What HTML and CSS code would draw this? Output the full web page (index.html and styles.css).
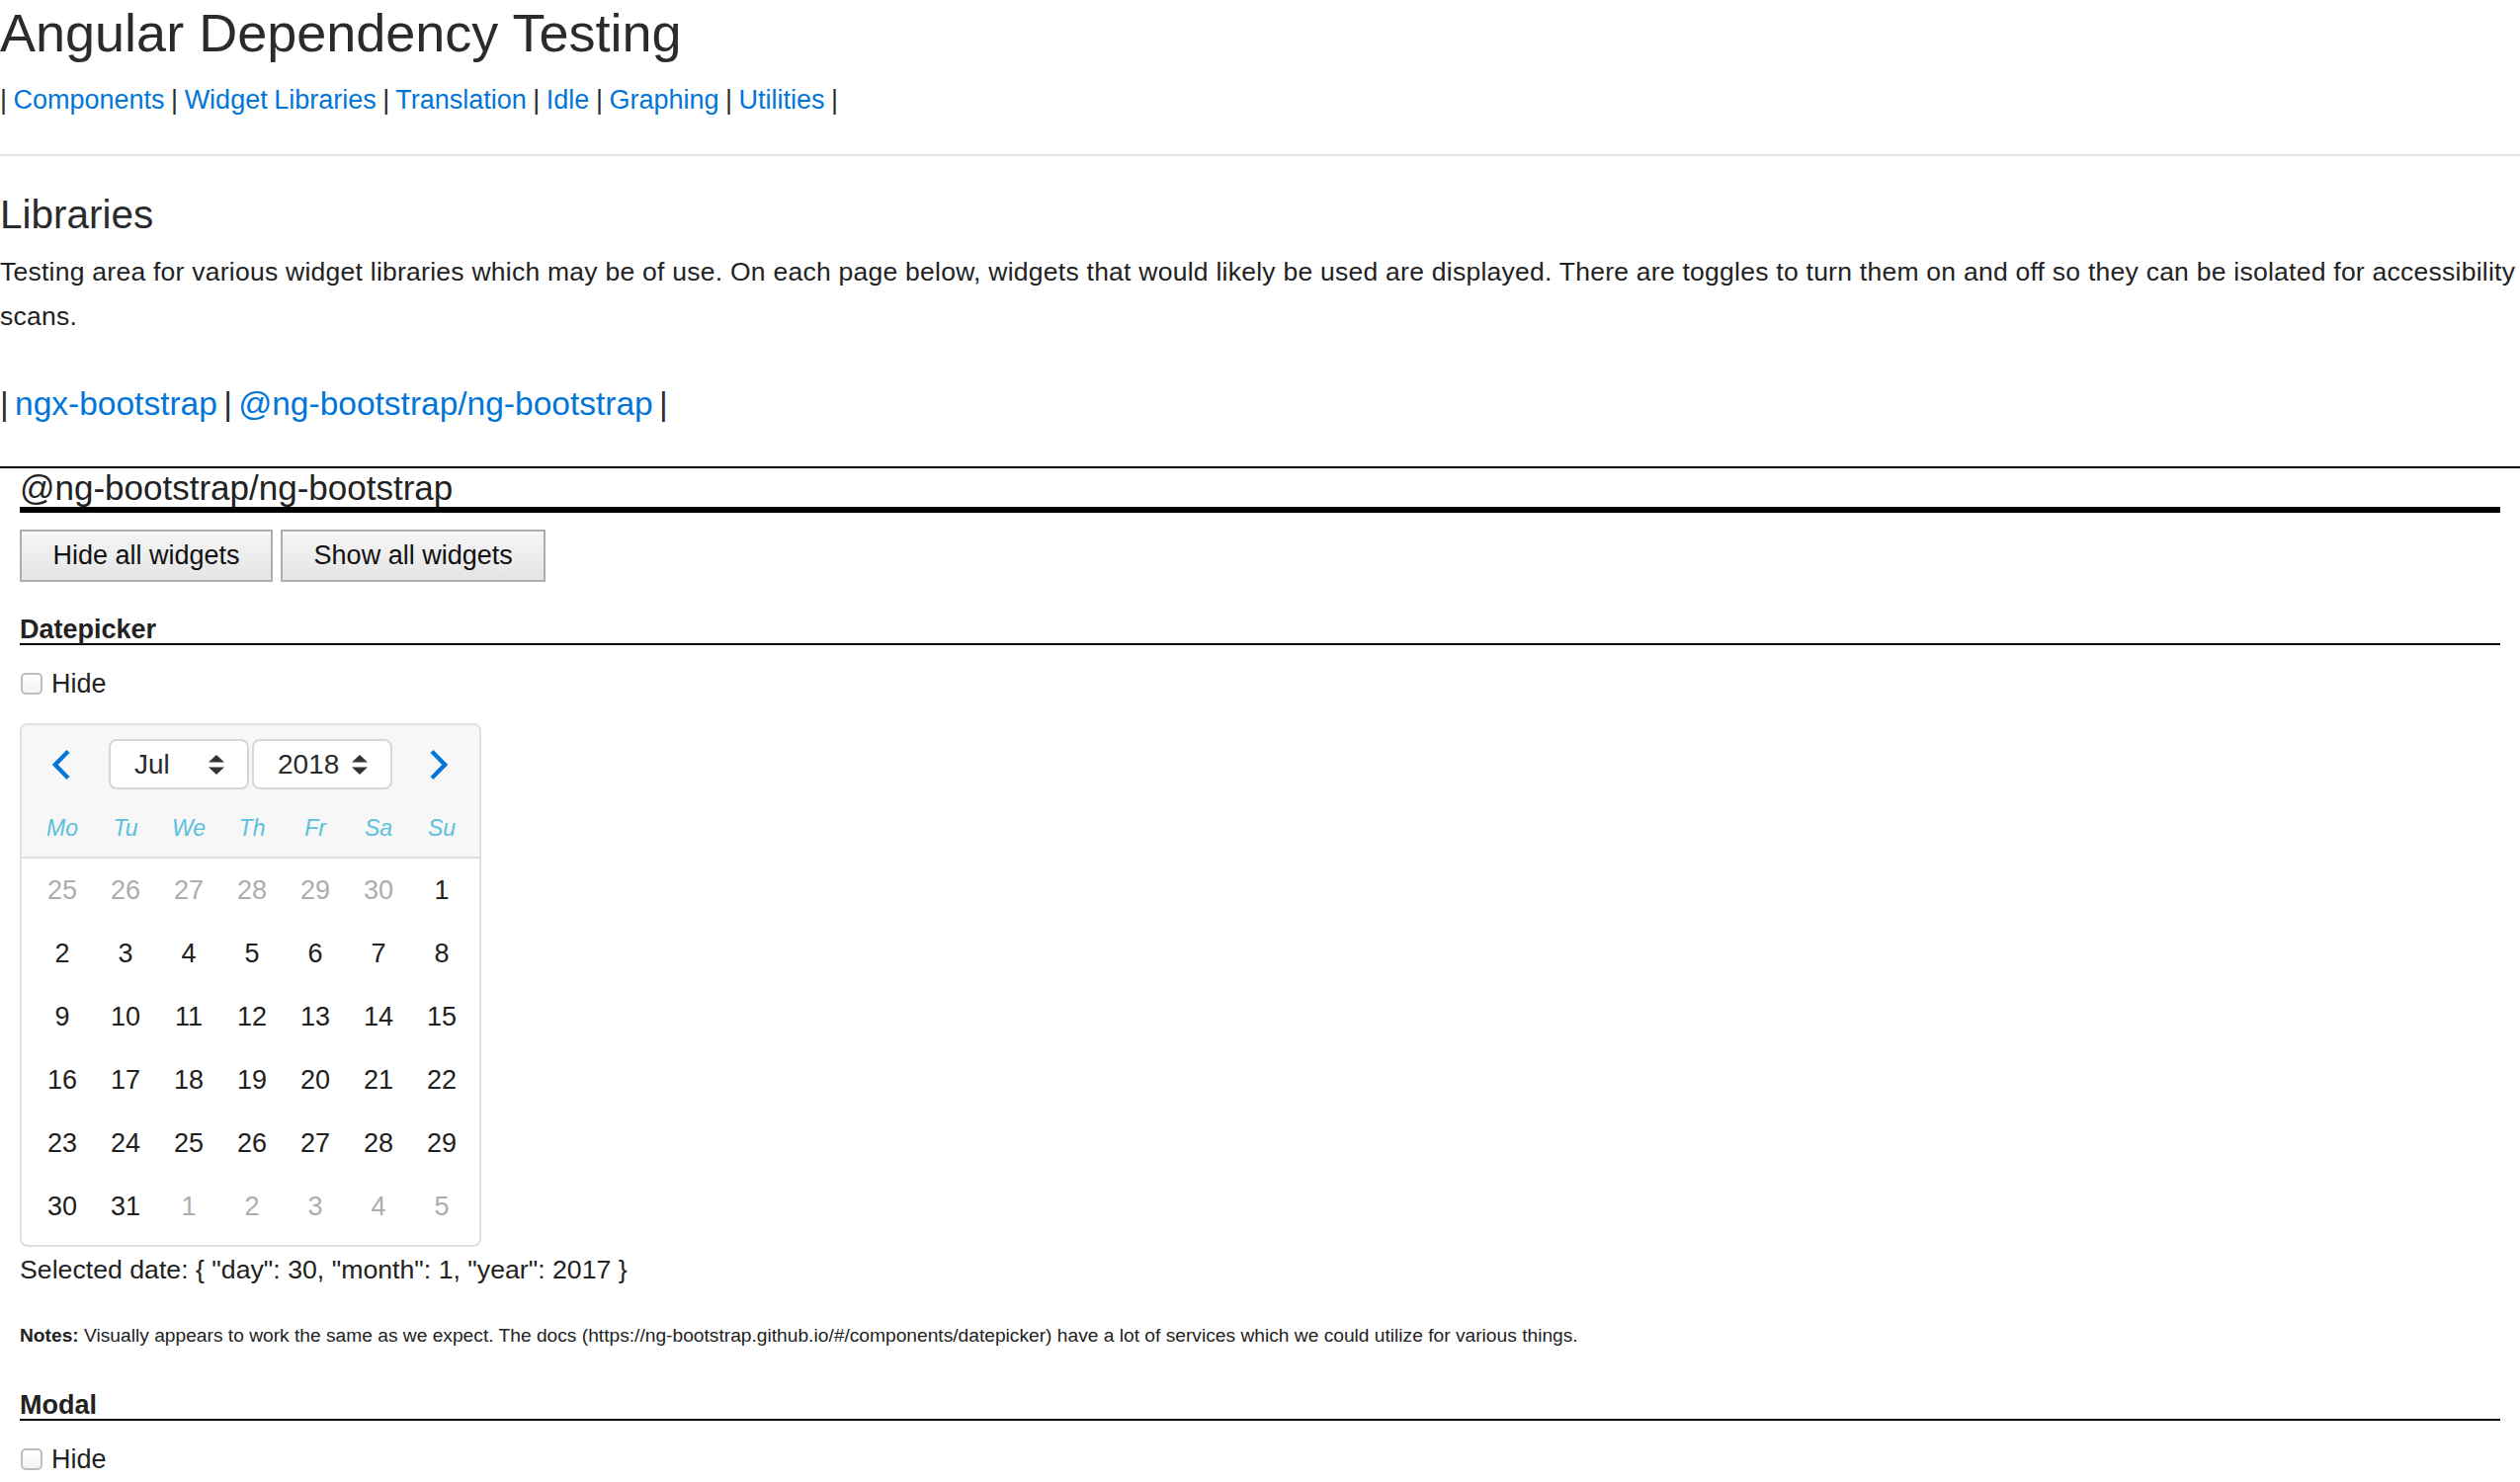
FILE: index.html
```html
<!DOCTYPE html>
<html lang="en">
<head>
<meta charset="utf-8">
<title>Angular Dependency Testing</title>
<link rel="stylesheet" href="styles.css">
</head>
<body>
<header class="site-header">
  <h1 class="site-title">Angular Dependency Testing</h1>
  <nav class="main-nav">| <a href="#">Components</a> | <a href="#">Widget Libraries</a> | <a href="#">Translation</a> | <a href="#">Idle</a> | <a href="#">Graphing</a> | <a href="#">Utilities</a> |</nav>
</header>
<hr class="divider">
<main>
  <h2 class="page-title">Libraries</h2>
  <p class="intro">Testing area for various widget libraries which may be of use. On each page below, widgets that would likely be used are displayed. There are toggles to turn them on and off so they can be isolated for accessibility scans.</p>
  <nav class="lib-nav">| <a href="#">ngx-bootstrap</a> | <a href="#">@ng-bootstrap/ng-bootstrap</a> |</nav>

  <section class="lib-section">
    <div class="lib-inner">
      <h3 class="lib-title">@ng-bootstrap/ng-bootstrap</h3>
      <div class="toolbar">
        <button class="btn" type="button">Hide all widgets</button>
        <button class="btn" type="button">Show all widgets</button>
      </div>

      <div class="widget">
        <h4 class="widget-title">Datepicker</h4>
        <label class="hide-toggle"><input type="checkbox" class="hide-box">Hide</label>

        <div class="datepicker">
          <div class="dp-header">
            <div class="dp-nav">
              <button class="dp-arrow" type="button" aria-label="Previous month">
                <svg width="20" height="30" viewBox="0 0 20 30"><path d="M16 1.5 L2.8 15 L16 28.5" fill="none" stroke="#0275d8" stroke-width="4.2"/></svg>
              </button>
              <div class="dp-selects">
                <div class="dp-select"><span>Jul</span><svg width="16" height="20" viewBox="0 0 16 20"><polygon points="0,7.5 8,0 16,7.5" fill="#333"/><polygon points="0,12.5 16,12.5 8,20" fill="#333"/></svg></div>
                <div class="dp-select"><span>2018</span><svg width="16" height="20" viewBox="0 0 16 20"><polygon points="0,7.5 8,0 16,7.5" fill="#333"/><polygon points="0,12.5 16,12.5 8,20" fill="#333"/></svg></div>
              </div>
              <button class="dp-arrow" type="button" aria-label="Next month">
                <svg width="20" height="30" viewBox="0 0 20 30"><path d="M4 1.5 L17.2 15 L4 28.5" fill="none" stroke="#0275d8" stroke-width="4.2"/></svg>
              </button>
            </div>
            <div class="dp-weekdays">
              <span>Mo</span><span>Tu</span><span>We</span><span>Th</span><span>Fr</span><span>Sa</span><span>Su</span>
            </div>
          </div>
          <div class="dp-days">
            <span class="muted">25</span><span class="muted">26</span><span class="muted">27</span><span class="muted">28</span><span class="muted">29</span><span class="muted">30</span><span>1</span>
            <span>2</span><span>3</span><span>4</span><span>5</span><span>6</span><span>7</span><span>8</span>
            <span>9</span><span>10</span><span>11</span><span>12</span><span>13</span><span>14</span><span>15</span>
            <span>16</span><span>17</span><span>18</span><span>19</span><span>20</span><span>21</span><span>22</span>
            <span>23</span><span>24</span><span>25</span><span>26</span><span>27</span><span>28</span><span>29</span>
            <span>30</span><span>31</span><span class="muted">1</span><span class="muted">2</span><span class="muted">3</span><span class="muted">4</span><span class="muted">5</span>
          </div>
        </div>

        <p class="selected">Selected date: { "day": 30, "month": 1, "year": 2017 }</p>
        <p class="notes"><strong>Notes:</strong> Visually appears to work the same as we expect. The docs (https://ng-bootstrap.github.io/#/components/datepicker) have a lot of services which we could utilize for various things.</p>
      </div>

      <div class="widget">
        <h4 class="widget-title widget-title-next">Modal</h4>
        <label class="hide-toggle"><input type="checkbox" class="hide-box">Hide</label>
      </div>
    </div>
  </section>
</main>
</body>
</html>
```

FILE: styles.css
```css
html, body {
  margin: 0;
  padding: 0;
  background: #fff;
}

body {
  font-family: "Liberation Sans", Arial, Helvetica, sans-serif;
  color: #292b2c;
  font-size: 27px;
}

a {
  color: #0275d8;
  text-decoration: none;
}

.site-title {
  margin: 2px 0 0;
  font-size: 54px;
  line-height: 62px;
  font-weight: normal;
  color: #2b2b2b;
}

.main-nav {
  margin-top: 19px;
  font-size: 27px;
  line-height: 36px;
  word-spacing: -1px;
}

.divider {
  margin: 37px 0 0;
  border: 0;
  height: 2px;
  background: #e6e6e6;
}

.page-title {
  margin: 35px 0 0;
  font-size: 40.5px;
  line-height: 48px;
  font-weight: normal;
}

.intro {
  margin: 12px 0 0;
  font-size: 26.5px;
  line-height: 45px;
  letter-spacing: 0.25px;
  color: #222;
}

.lib-nav {
  margin-top: 46px;
  font-size: 33.5px;
  line-height: 40px;
  word-spacing: -3px;
}

.lib-section {
  margin-top: 43px;
  border-top: 2px solid #000;
}

.lib-inner {
  padding: 0 20px;
}

.lib-title {
  margin: 1px 0 0;
  font-size: 35px;
  line-height: 38px;
  font-weight: normal;
  color: #222;
  border-bottom: 6px solid #000;
}

.toolbar {
  display: flex;
  gap: 8px;
  margin-top: 17px;
}

.btn {
  font-family: inherit;
  font-size: 27px;
  line-height: 49px;
  padding: 0 31.5px;
  color: #111;
  border: 2px solid #adadad;
  border-radius: 0;
  background: linear-gradient(#f6f6f6, #e4e4e4);
}

.widget-title {
  margin: 34px 0 0;
  font-size: 27px;
  line-height: 28px;
  font-weight: bold;
  color: #222;
  border-bottom: 2px solid #000;
}

.widget-title-next {
  margin-top: 43px;
}

.hide-toggle {
  display: flex;
  align-items: center;
  margin-top: 21px;
  height: 36px;
  line-height: 36px;
  font-size: 27px;
  color: #222;
}

.hide-box {
  appearance: none;
  -webkit-appearance: none;
  width: 22px;
  height: 22px;
  margin: 0 9px 0 1px;
  border: 2px solid #bdbdbd;
  border-radius: 5px;
  background: linear-gradient(#fff, #f3f3f3);
}

.datepicker {
  margin-top: 22px;
  width: 463px;
  border: 2px solid #dfdfdf;
  border-radius: 8px;
  overflow: hidden;
}

.dp-header {
  background: #f7f7f7;
  border-bottom: 2px solid #dfdfdf;
  padding: 14px 6px 0 9px;
}

.dp-nav {
  display: flex;
  align-items: center;
  height: 51px;
}

.dp-arrow {
  flex: none;
  width: 64px;
  height: 51px;
  padding: 0;
  border: 0;
  background: transparent;
  display: flex;
  align-items: center;
  justify-content: center;
}

.dp-arrow:last-child {
  margin-right: 4px;
}

.dp-selects {
  flex: 1;
  display: flex;
  gap: 3px;
  padding-left: 15px;
}

.dp-select {
  box-sizing: border-box;
  width: 142px;
  height: 51px;
  display: flex;
  align-items: center;
  justify-content: space-between;
  padding: 0 23px 0 24px;
  background: #fff;
  border: 2px solid #d6d6d6;
  border-radius: 8px;
  font-size: 28px;
  color: #292b2c;
}

.dp-weekdays {
  box-sizing: border-box;
  display: grid;
  grid-template-columns: repeat(7, 64px);
  height: 62px;
  padding-top: 5px;
  margin-top: 6px;
  align-items: center;
  justify-items: center;
  font-style: italic;
  font-size: 23px;
  color: #5bc0de;
}

.dp-days {
  display: grid;
  grid-template-columns: repeat(7, 64px);
  grid-auto-rows: 64px;
  align-items: center;
  justify-items: center;
  padding: 0 6px 7px 9px;
  font-size: 27px;
  color: #212121;
}

.dp-days .muted {
  color: #adadad;
}

.selected {
  margin: 5px 0 0;
  font-size: 26.7px;
  line-height: 36px;
  color: #222;
}

.notes {
  margin: 36px 0 0;
  font-size: 19.2px;
  line-height: 26px;
  color: #222;
}
```
